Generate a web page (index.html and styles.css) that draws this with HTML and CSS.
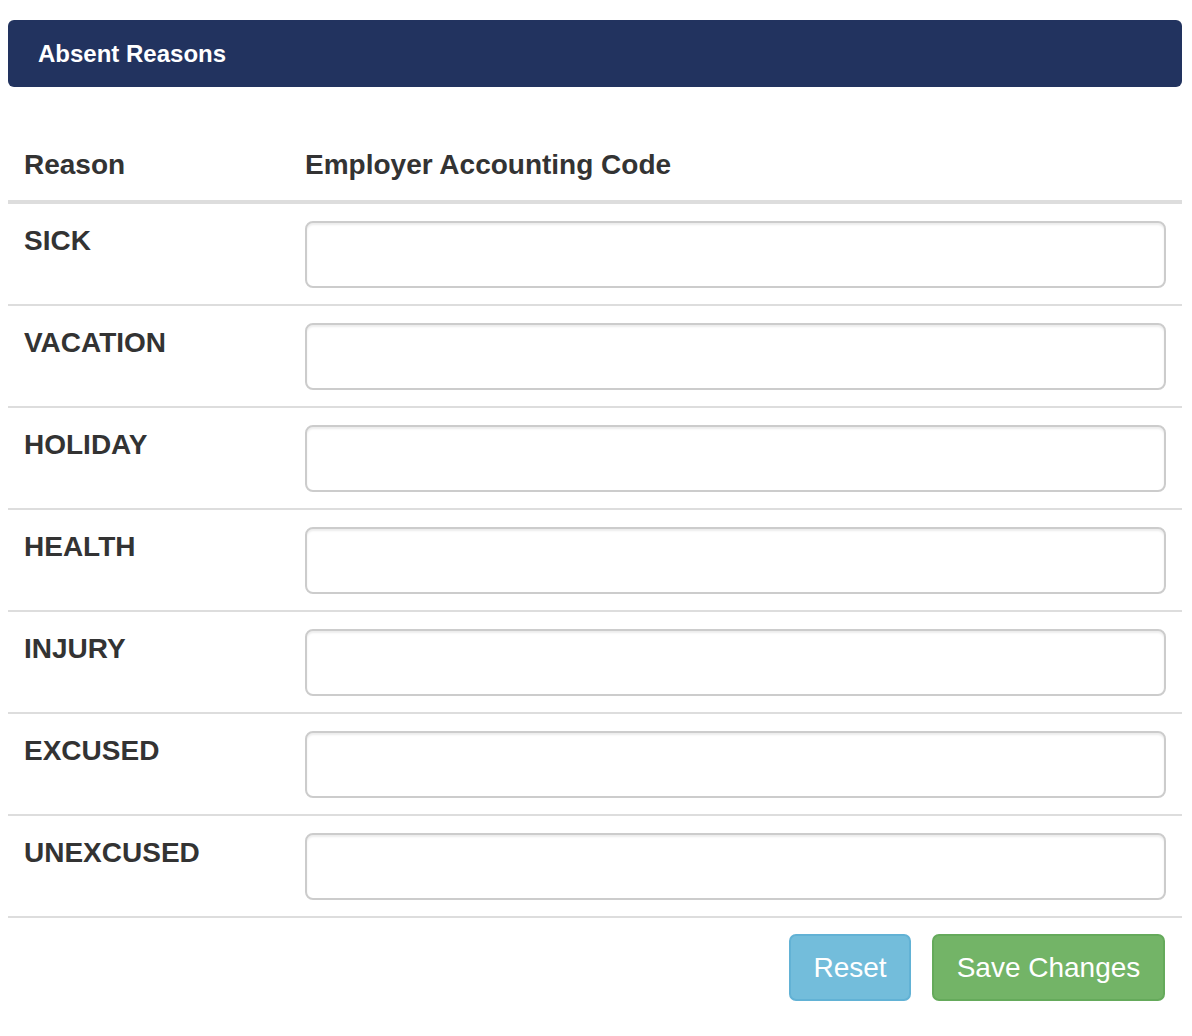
FILE: index.html
```html
<!DOCTYPE html>
<html lang="en">
<head>
<meta charset="utf-8">
<title>Absent Reasons</title>
<link rel="stylesheet" href="styles.css">
</head>
<body>
<div class="page">
  <div class="panel-heading">Absent Reasons</div>
  <form class="reasons-form">
    <table class="reasons-table">
      <thead>
        <tr><th class="col-reason">Reason</th><th>Employer Accounting Code</th></tr>
      </thead>
      <tbody>
        <tr><td class="label">SICK</td><td><input class="code-input" type="text"></td></tr>
        <tr><td class="label">VACATION</td><td><input class="code-input" type="text"></td></tr>
        <tr><td class="label">HOLIDAY</td><td><input class="code-input" type="text"></td></tr>
        <tr><td class="label">HEALTH</td><td><input class="code-input" type="text"></td></tr>
        <tr><td class="label">INJURY</td><td><input class="code-input" type="text"></td></tr>
        <tr><td class="label">EXCUSED</td><td><input class="code-input" type="text"></td></tr>
        <tr><td class="label">UNEXCUSED</td><td><input class="code-input" type="text"></td></tr>
      </tbody>
    </table>
    <div class="actions">
      <button type="button" class="btn btn-info">Reset</button>
      <button type="button" class="btn btn-success">Save Changes</button>
    </div>
  </form>
</div>
</body>
</html>
```

FILE: styles.css
```css
* { box-sizing: border-box; }
html, body { margin: 0; padding: 0; background: #fff; }
body {
  font-family: "Liberation Sans", Arial, Helvetica, sans-serif;
  color: #333;
  font-size: 28px;
}
.page {
  padding: 20px 10px 0 8px;
}
.panel-heading {
  background: #22335f;
  color: #fff;
  border-radius: 6px;
  height: 67px;
  padding: 0 30px;
  display: flex;
  align-items: center;
  font-size: 24px;
  font-weight: bold;
}
.reasons-form { margin-top: 42px; }
.reasons-table {
  width: 100%;
  border-collapse: collapse;
  border-spacing: 0;
}
.reasons-table th {
  text-align: left;
  font-weight: bold;
  padding: 16px 16px 15px;
  line-height: 40px;
  border-bottom: 4px solid #ddd;
  vertical-align: bottom;
}
.reasons-table th.col-reason { width: 281px; }
.reasons-table td {
  padding: 17px 16px 16px;
  border-bottom: 2px solid #ddd;
  vertical-align: top;
  line-height: 40px;
}
.reasons-table td.label {
  font-weight: bold;
  padding-top: 17px;
}
.code-input {
  display: block;
  width: 100%;
  height: 67px;
  border: 2px solid #ccc;
  border-radius: 8px;
  box-shadow: inset 0 2px 2px rgba(0,0,0,0.075);
  background: #fff;
  font-size: 28px;
  font-family: inherit;
  padding: 0 24px;
  margin: 0;
}
.actions {
  display: flex;
  justify-content: flex-end;
  gap: 21px;
  padding: 16px 17px 0 0;
}
.btn {
  height: 67px;
  border-radius: 7px;
  font-family: inherit;
  font-size: 28px;
  color: #fff;
  padding: 0;
  border: 2px solid transparent;
  white-space: nowrap;
  cursor: pointer;
}
.btn-info {
  background: #73bddb;
  border-color: #62b2d5;
  width: 122px;
}
.btn-success {
  background: #73b467;
  border-color: #65aa5b;
  width: 233px;
}
```
